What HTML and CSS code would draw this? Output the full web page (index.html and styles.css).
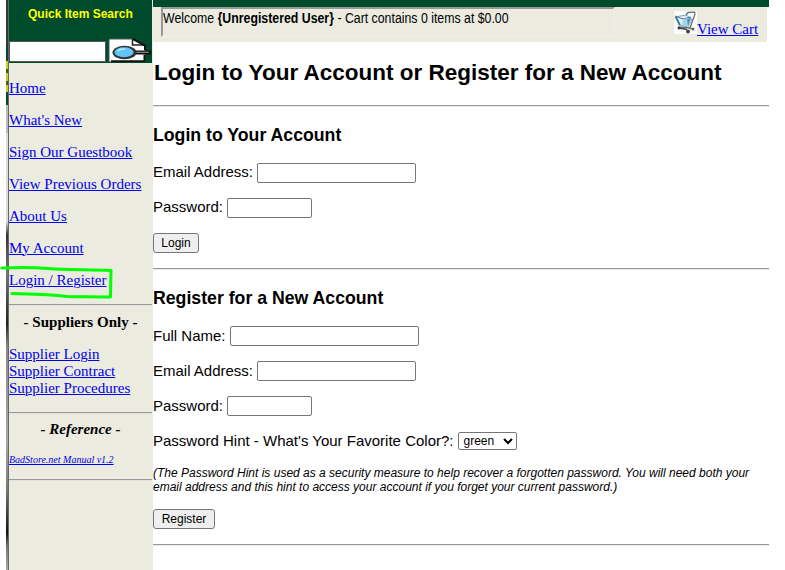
FILE: index.html
```
<!DOCTYPE html>
<html lang="en">
<head>
<meta charset="utf-8">
<title>BadStore.net - Login / Register</title>
<link rel="stylesheet" href="styles.css">
</head>
<body>
<div class="page">
  <div class="edge">
    <i class="edge-dark"></i><i class="edge-green"></i><i class="edge-yellow"></i><i class="edge-green low"></i><i class="edge-photo"></i>
  </div>
  <aside class="sidebar">
    <form class="search">
      <b class="search-title">Quick Item Search</b>
      <div class="search-row">
        <input class="search-input" type="text" aria-label="Search">
        <svg class="search-icon" viewBox="0 0 43 24">
          <path d="M1 1H25L37 7V24H1Z" fill="#fff" stroke="#555" stroke-width="1"/>
          <path d="M24.500 1V7H37" fill="none" stroke="#222" stroke-width="1.500"/>
          <path d="M25 1L37 7.500V12" fill="none" stroke="#111" stroke-width="2"/>
          <path d="M3 23.200H36.500V17" fill="none" stroke="#111" stroke-width="2"/>
          <path d="M26 14.500H43" stroke="#111" stroke-width="4"/>
          <path d="M28 14.300H41" stroke="#888" stroke-width="1.200"/>
          <ellipse cx="16.500" cy="14.500" rx="12" ry="6.700" fill="#333"/>
          <ellipse cx="16" cy="14.200" rx="9.500" ry="5" fill="#62c5fa"/>
          <path d="M10 13Q12 10.500 17 11" fill="none" stroke="#b9eaff" stroke-width="1.500"/>
        </svg>
      </div>
    </form>
    <nav class="menu">
      <a href="#">Home</a>
      <a href="#">What's New</a>
      <a href="#">Sign Our Guestbook</a>
      <a href="#">View Previous Orders</a>
      <a href="#">About Us</a>
      <a href="#">My Account</a>
      <a href="#" class="marked">Login / Register<svg class="marker" viewBox="0 0 114 34"><path d="M2 3C22 2 30 2 48 3.500C66 5 88 4.500 111 5.500L110.500 32C92 31.500 79 32 67 31.500C47 29 30 29 12 28.500" fill="none" stroke="#0f0" stroke-width="3" stroke-linecap="round" stroke-linejoin="round"/></svg></a>
    </nav>
    <hr>
    <h4 class="group">- Suppliers Only -</h4>
    <nav class="suppliers">
      <a href="#">Supplier Login</a>
      <a href="#">Supplier Contract</a>
      <a href="#">Supplier Procedures</a>
    </nav>
    <hr>
    <h4 class="group reference">- Reference -</h4>
    <a href="#" class="manual">BadStore.net Manual v1.2</a>
    <hr>
  </aside>
  <div class="content">
    <div class="banner"></div>
    <header class="topbar">
      <div class="welcome"><span class="welcome-text">Welcome <b>{Unregistered User}</b> - Cart contains 0 items at $0.00</span></div>
      <svg class="cart-icon" viewBox="0 0 23 23">
        <path d="M0 0H23V23H0Z" fill="#fbfcfc"/>
        <path d="M1 6L12 4L18 8L14 16L5 14Z" fill="#e2f2fa" stroke="#6b8ba0" stroke-width=".8"/>
        <path d="M1 5L9 8L17 6" fill="none" stroke="#48708c" stroke-width="1"/>
        <path d="M9 8L8 14L14 16L17 7Z" fill="#a4d3ed"/>
        <path d="M13 8L17 7L14 15Z" fill="#4b93c3"/>
        <path d="M2 6L6 14" stroke="#326e99" stroke-width="1.500"/>
        <path d="M12 4L14 1.500L20.500 1.200L21 3L16 17L4 16M15 17L19 18" fill="none" stroke="#68717a" stroke-width="1.300"/>
        <path d="M5 17L13 18.500" stroke="#444" stroke-width="1.500"/>
        <circle cx="5" cy="17" r="1.500" fill="#444"/><circle cx="14" cy="20.500" r="2" fill="#444"/><circle cx="19" cy="18" r="1.500" fill="#666"/>
      </svg>
      <a href="#" class="cart-link">View Cart</a>
    </header>
    <main>
      <h1>Login to Your Account or Register for a New Account</h1>
      <hr>
      <form class="signin">
        <h2>Login to Your Account</h2>
        <div class="field"><label for="le">Email Address:</label><input id="le" class="email" type="text"></div>
        <div class="field"><label for="lp">Password:</label><input id="lp" class="password" type="password"></div>
        <div class="field"><button class="login" type="button">Login</button></div>
      </form>
      <hr>
      <form>
        <h2>Register for a New Account</h2>
        <div class="field"><label for="rn">Full Name:</label><input id="rn" class="name" type="text"></div>
        <div class="field"><label for="re">Email Address:</label><input id="re" class="email" type="text"></div>
        <div class="field"><label for="rp">Password:</label><input id="rp" class="password" type="password"></div>
        <div class="field hint"><label for="rh">Password Hint - What's Your Favorite Color?:</label><select id="rh"><option>green</option></select></div>
        <p class="note">(The Password Hint is used as a security measure to help recover a forgotten password. You will need both your<br>email address and this hint to access your account if you forget your current password.)</p>
        <button class="register" type="button">Register</button>
      </form>
      <hr>
    </main>
  </div>
</div>
</body>
</html>
```
FILE: styles.css
```
* { box-sizing: border-box; }
body { margin: 0; background: #fff; color: #000; overflow: hidden; }
a { color: #0000ee; text-underline-offset: 1px; text-decoration-thickness: 1px; }
hr { margin: 0; height: 2px; border: 0; border-top: 1px solid #999; border-bottom: 1px solid #e8e8e8; }
h1, h2, h4 { margin: 0; white-space: nowrap; }

.page { display: grid; grid-template-columns: 3px 144px 616px; height: 570px; padding-left: 6px; }
.edge { display: flex; flex-direction: column; border-right: 1px solid #666; }
.edge i { display: block; }
.edge-dark { height: 45px; background: #32383b; }
.edge-green { height: 16px; background: #004b2c; }
.edge-yellow { height: 31px; background: repeating-linear-gradient(#c7d019 0 8px, #405c10 8px 12px); }
.edge-green.low { height: 13px; }
.edge-photo { flex: 1; background: linear-gradient(#bbb 0 6%, #ddd 6% 25%, #333 28%, #777 36%, #222 47%, #888 52%, #aaa 72%, #777 83%, #111 92%, #777 95%, #aaa); }

.sidebar { background: #ebebe0; font-family: "Liberation Serif", "Times New Roman", serif; }
.sidebar hr { width: 143px; border-bottom-color: #e4e4dc; }
.search { width: 143px; height: 63px; background: #004b2c; }
.search-title { display: block; height: 38px; padding: 6px 0 0 19px; color: #ff0; font: bold 12px/16px "Liberation Sans", Arial, sans-serif; white-space: nowrap; }
.search-row { display: flex; align-items: flex-end; gap: 2px; height: 24px; }
.search-input { width: 97px; height: 21px; border: 1px solid #555; border-radius: 0; background: #fff; }
.search-icon { width: 43px; height: 24px; }
.menu { display: flex; flex-direction: column; align-items: flex-start; gap: 15px; height: 241px; padding-top: 17px; font-size: 15px; line-height: 17px; white-space: nowrap; }
.marked { position: relative; }
.marker { position: absolute; left: -9px; top: -7px; width: 114px; height: 34px; pointer-events: none; }
.group { width: 143px; height: 40px; padding-top: 8px; text-align: center; font-size: 15px; line-height: 17px; }
.suppliers { display: flex; flex-direction: column; align-items: flex-start; height: 66px; font-size: 15px; line-height: 17px; white-space: nowrap; }
.reference { height: 39px; padding-top: 7px; font-style: italic; }
.manual { display: block; height: 26px; padding-top: 1px; font-size: 10px; line-height: 11px; font-style: italic; white-space: nowrap; }

.banner { height: 7px; background: #004b2c; }
.topbar { display: flex; width: 614px; height: 35px; background: #ebebe0; }
.welcome { width: 454px; height: 30px; margin-left: 8px; border: 2px solid #eeedea; border-top-color: #999; border-left-color: #999; font: 14px/19px "Liberation Sans", Arial, sans-serif; white-space: nowrap; }
.welcome-text { display: inline-block; transform: scaleX(.88); transform-origin: left; }
.cart-icon { width: 23px; height: 23px; margin: 4px 0 0 59px; }
.cart-link { margin-top: 14px; font: 15px/17px "Liberation Serif", "Times New Roman", serif; white-space: nowrap; }

main { font: 15px/17px "Liberation Sans", Arial, sans-serif; }
h1 { height: 63px; padding: 17px 0 0 1px; font-size: 22.500px; line-height: 28px; }
h2 { height: 56px; padding-top: 18px; font-size: 17.700px; line-height: 20px; }
.field { display: flex; align-items: center; gap: 4px; height: 20px; margin-bottom: 15px; white-space: nowrap; }
.field label { padding-bottom: 2px; }
.signin .field label { padding-bottom: 3px; }
.hint { gap: 5px; }
input, select, button { margin: 0; font: 12px "Liberation Sans", Arial, sans-serif; }
.field input { height: 20px; padding: 0; border: 1px solid #767676; border-radius: 2px; background: #fff; }
.field .email { width: 159px; }
.field .password { width: 85px; }
.field .name { width: 189px; }
select { width: 59px; height: 18px; border: 1px solid #767676; border-radius: 2px; background: #fff; color: #000; }
button { display: block; height: 20px; padding: 0; border: 1px solid #767676; border-radius: 3px; background: #efefef; color: #000; }
.login { width: 46px; }
.register { width: 62px; margin-bottom: 15px; }
.note { margin: 0 0 15px; font-size: 12px; line-height: 14px; font-style: italic; white-space: nowrap; }
```
